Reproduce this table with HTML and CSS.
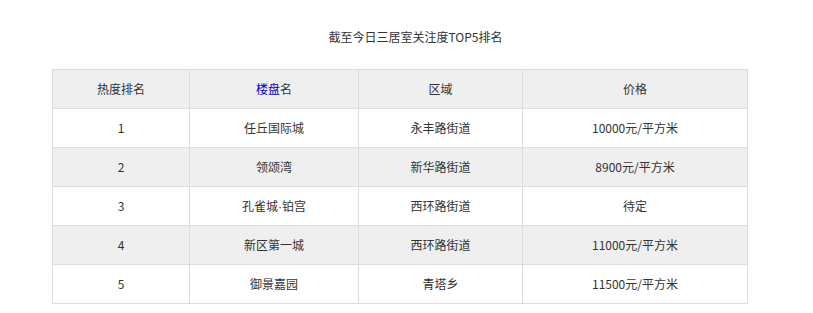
FILE: index.html
```html
<!DOCTYPE html>
<html lang="zh-CN">
<head>
  <meta charset="UTF-8">
  <title>三居室关注度排名</title>
  <link rel="stylesheet" href="styles.css">
</head>
<body>
  <div class="wrap">
    <p class="caption">截至今日三居室关注度TOP5排名</p>

    <table class="rank">
      <colgroup>
        <col class="c-rank">
        <col class="c-name">
        <col class="c-area">
        <col class="c-price">
      </colgroup>
      <thead>
        <tr>
          <th>热度排名</th>
          <th><a href="#">楼盘</a>名</th>
          <th>区域</th>
          <th>价格</th>
        </tr>
      </thead>
      <tbody>
        <tr>
          <td>1</td>
          <td>任丘国际城</td>
          <td>永丰路街道</td>
          <td>10000元/平方米</td>
        </tr>
        <tr>
          <td>2</td>
          <td>领颂湾</td>
          <td>新华路街道</td>
          <td>8900元/平方米</td>
        </tr>
        <tr>
          <td>3</td>
          <td>孔雀城<span class="dot">·</span>铂宫</td>
          <td>西环路街道</td>
          <td>待定</td>
        </tr>
        <tr>
          <td>4</td>
          <td>新区第一城</td>
          <td>西环路街道</td>
          <td>11000元/平方米</td>
        </tr>
        <tr>
          <td>5</td>
          <td>御景嘉园</td>
          <td>青塔乡</td>
          <td>11500元/平方米</td>
        </tr>
      </tbody>
    </table>
  </div>
</body>
</html>
```

FILE: styles.css
```css
body {
  font-family: "Noto Sans CJK SC", "Noto Sans", sans-serif;
  font-size: 12px;
  color: #333;
  background: #fff;
  margin: 0;
}

.wrap {
  width: 727px;
  margin-left: 52px;
  padding-top: 28px;
}

.caption {
  margin: 0 0 23px;
  height: 18px;
  line-height: 18px;
  text-align: center;
}

.rank {
  width: 695px;
  table-layout: fixed;
  border-collapse: collapse;
}

.c-rank { width: 137px; }
.c-name { width: 169px; }
.c-area { width: 164px; }
.c-price { width: 225px; }

.rank th,
.rank td {
  height: 38px;
  padding: 0;
  border: 1px solid #ddd;
  text-align: center;
  font-weight: normal;
  line-height: 18px;
}

.rank th {
  background: #efefef;
}

.rank tbody tr:nth-child(even) td {
  background: #efefef;
}

.rank a {
  color: #0000cc;
  text-decoration: none;
}

/* narrow latin middle dot, the CJK one is full width */
.dot {
  font-family: "Liberation Sans", sans-serif;
}
```
